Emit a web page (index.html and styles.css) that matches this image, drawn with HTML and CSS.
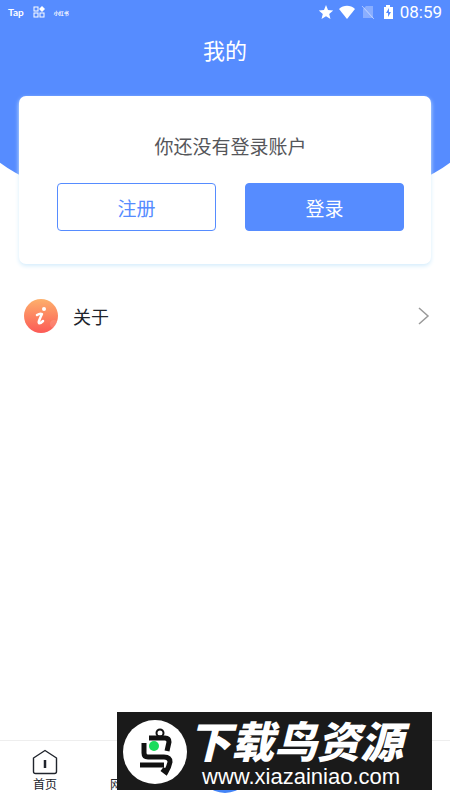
FILE: index.html
```html
<!DOCTYPE html>
<html lang="zh-CN">
<head>
<meta charset="utf-8">
<meta name="viewport" content="width=device-width, initial-scale=1">
<title>我的</title>
<link rel="stylesheet" href="styles.css">
</head>
<body>
<header class="hero">
  <div class="status">
    <div class="status-group">
      <span class="tap">Tap</span>
      <svg width="12" height="12" viewBox="0 0 12 12" fill="none" stroke="#fff"><rect x="1" y="1" width="4" height="4"/><rect x="1" y="7" width="4" height="4"/><rect x="7" y="7" width="4" height="4"/><path d="M9 0 12 3 9 6 6 3Z" fill="#fff" stroke="none"/></svg>
      <span class="tiny">小红书</span>
    </div>
    <div class="status-group status-right">
      <svg width="16" height="16" viewBox="0 0 16 16" fill="#fff"><path d="m8 1 2 5 5.200.4-4 3.500 1.300 5.100L8 12.300 3.500 15l1.300-5.100-4-3.500L6 6Z"/></svg>
      <svg width="18" height="16" viewBox="0 0 18 16" fill="#fff"><path d="M1 5C5.500.8 12.500.8 17 5L9 15Z"/></svg>
      <svg width="16" height="16" viewBox="0 0 16 16"><path d="M6 2h7v12H3V5Z" fill="#fff" opacity=".3"/><path d="m2 2 12 13" stroke="#fff" opacity=".5"/></svg>
      <svg width="16" height="16" viewBox="0 0 16 16"><path d="M6 1h4v2h3v12H4V3h2Z" fill="#fff"/><path d="M9 4 6 9h2v4l3-5H9Z" fill="#568cff"/></svg>
      <time class="clock">08:59</time>
    </div>
  </div>
  <h1 class="title">我的</h1>
</header>
<main class="content">
  <section class="card">
    <p class="notice">你还没有登录账户</p>
    <div class="actions">
      <button class="btn btn-outline" type="button">注册</button>
      <button class="btn btn-solid" type="button">登录</button>
    </div>
  </section>
  <a class="row" href="#about">
    <svg width="34" height="34" viewBox="0 0 34 34">
      <defs><linearGradient id="warm" x1="0" y1="0" x2="0" y2="1"><stop offset="0" stop-color="#fdb06c"/><stop offset="1" stop-color="#fc5a56"/></linearGradient></defs>
      <circle cx="17" cy="17" r="17" fill="url(#warm)"/>
      <circle cx="30" cy="25" r="4" fill="#fff" opacity=".12"/>
      <circle cx="20" cy="10" r="2" fill="#fff"/>
      <path d="M13 16q3-2 5-1-2 4-3 7c-1 3 1 3 4 0" fill="none" stroke="#fff" stroke-width="2.500" stroke-linecap="round" stroke-linejoin="round"/>
    </svg>
    <span class="row-label">关于</span>
    <svg width="12" height="18" viewBox="0 0 12 18" fill="none" stroke="#999" stroke-width="1.500"><path d="m1 1 9 8-9 8"/></svg>
  </a>
</main>
<nav class="tabs">
  <a class="tab" href="#home">
    <svg width="26" height="26" viewBox="0 0 26 26" fill="none" stroke="#20242c" stroke-width="1.400" stroke-linejoin="round"><path d="M1.500 9 13 1.500 24.500 9v13.500q0 2-2 2h-19q-2 0-2-2Z"/><path d="M13 11v8" stroke-width="2.500"/></svg>
    <span>首页</span>
  </a>
  <a class="tab" href="#net"><span class="net-label">网</span></a>
  <div class="tab"><span class="fab"></span></div>
  <div class="tab"></div>
  <div class="tab"></div>
</nav>
<aside class="banner">
  <svg width="66" height="66" viewBox="0 0 66 66" fill="none">
    <circle cx="33" cy="33" r="32" fill="#fff"/>
    <g stroke="#111">
      <circle cx="38" cy="14" r="3.500" stroke-width="2"/>
      <path d="M27 19h16q4 0 4 4l-2 9" stroke-width="5"/>
      <path d="M22 24v10q0 4 4 4h16q6 0 6 5-1 5-4 10l-4-3" stroke-width="5"/>
      <path d="M18 46h24" stroke-width="5"/>
    </g>
    <circle cx="32" cy="27" r="5" fill="#1bdc5b"/>
  </svg>
  <div class="banner-text">
    <strong class="banner-name">下载鸟资源</strong>
    <span class="banner-url">www.xiazainiao.com</span>
  </div>
</aside>
</body>
</html>
```
FILE: styles.css
```css
* { box-sizing: border-box; }

body {
  margin: 0;
  min-height: 100vh;
  display: flex;
  flex-direction: column;
  position: relative;
  background: #fff;
  color: #20242c;
  font-family: Roboto, "Noto Sans CJK SC", sans-serif;
}

a { color: inherit; text-decoration: none; }
svg { display: block; flex: none; }

.hero {
  position: relative;
  isolation: isolate;
  overflow: hidden;
  height: 216px;
  color: #fff;
}

.hero::before {
  content: "";
  position: absolute;
  z-index: -1;
  inset: 0 -6% 1px;
  background: #568cff;
  border-radius: 0 0 50% 50% / 0 0 95px 95px;
}

.status {
  display: flex;
  justify-content: space-between;
  align-items: center;
  height: 24px;
  padding: 0 8px;
}

.status-group { display: flex; align-items: center; gap: 9px; }
.status-right { gap: 4px; }
.tap { font: 700 10px/12px Lato, sans-serif; }
.tiny { font-size: 5px; font-weight: 700; }
.clock { font-size: 17px; line-height: 24px; }

.title {
  margin: 12px 0 0;
  text-align: center;
  font-size: 22px;
  font-weight: 400;
  line-height: 32px;
}

.content { flex: 1; margin-top: -120px; position: relative; }

.card {
  margin: 0 19px;
  padding: 38px 27px 33px 38px;
  background: #fff;
  border-radius: 7px;
  box-shadow: 0 2px 4px #d5edfc;
}

.notice {
  margin: 0 0 21px;
  text-align: center;
  font-size: 19px;
  line-height: 28px;
  color: #55565a;
}

.actions { display: grid; grid-template-columns: 1fr 1fr; gap: 29px; }

.btn {
  height: 48px;
  padding: 0;
  border: 1px solid #568cff;
  border-radius: 4px;
  font: inherit;
  font-size: 19px;
}

.btn-outline { background: #fff; color: #568cff; }
.btn-solid { background: #568cff; color: #fff; }

.row {
  display: flex;
  align-items: center;
  margin-top: 35px;
  padding: 0 20px 0 24px;
}

.row-label {
  flex: 1;
  margin-left: 15px;
  padding-top: 4px;
  font-size: 18px;
  line-height: 28px;
}

.tabs {
  display: grid;
  grid-template-columns: repeat(5, 1fr);
  height: 60px;
  border-top: 1px solid #eee;
}

.tab {
  display: flex;
  flex-direction: column;
  align-items: center;
  justify-content: flex-end;
  min-height: 0;
  padding-bottom: 7px;
  font-size: 12px;
  line-height: 16px;
}

.tab svg { margin-bottom: 2px; }

.net-label { width: 50px; }

.fab {
  width: 56px;
  height: 56px;
  flex: none;
  border-radius: 50%;
  background: #4384f7;
}

.banner {
  position: absolute;
  right: 18px;
  bottom: 10px;
  width: 315px;
  height: 78px;
  padding: 2px 0 0 5px;
  display: flex;
  align-items: center;
  background: #1a1a1a;
  color: #fff;
}

.banner-text {
  display: flex;
  flex-direction: column;
  gap: 4px;
  padding-top: 2px;
}

.banner-name {
  font: italic 900 43px/44px "Noto Sans CJK SC", sans-serif;
  white-space: nowrap;
}

.banner-url {
  padding-left: 14px;
  font: 22px/24px "Liberation Sans", sans-serif;
}
```
